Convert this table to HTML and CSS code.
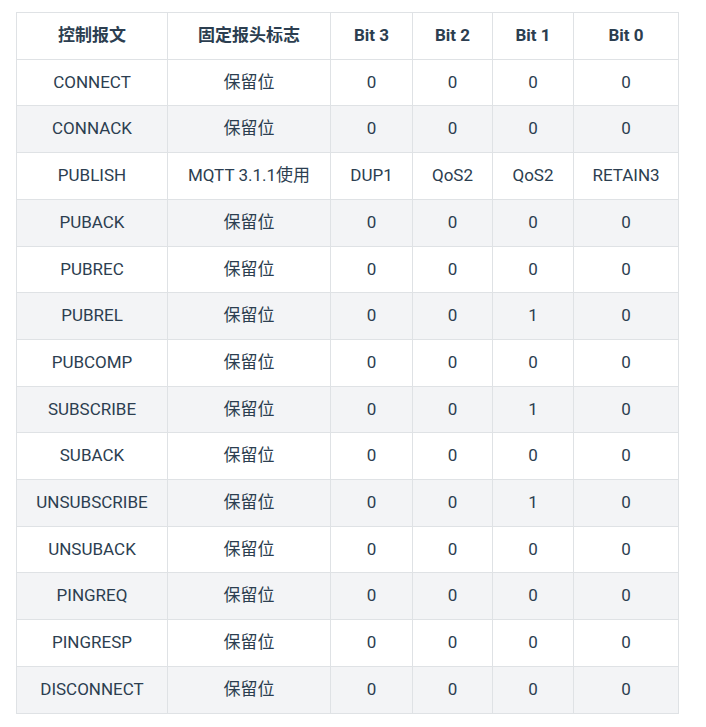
FILE: index.html
```html
<!DOCTYPE html>
<html lang="zh">
<head>
<meta charset="utf-8">
<link rel="stylesheet" href="styles.css">
</head>
<body>
<table class="tbl">
  <colgroup>
    <col class="c1"><col class="c2"><col class="c3"><col class="c4"><col class="c5"><col class="c6">
  </colgroup>
  <thead>
    <tr><th>控制报文</th><th>固定报头标志</th><th>Bit 3</th><th>Bit 2</th><th>Bit 1</th><th>Bit 0</th></tr>
  </thead>
  <tbody>
    <tr><td>CONNECT</td><td>保留位</td><td>0</td><td>0</td><td>0</td><td>0</td></tr>
    <tr><td>CONNACK</td><td>保留位</td><td>0</td><td>0</td><td>0</td><td>0</td></tr>
    <tr><td>PUBLISH</td><td>MQTT 3.1.1使用</td><td>DUP1</td><td>QoS2</td><td>QoS2</td><td>RETAIN3</td></tr>
    <tr><td>PUBACK</td><td>保留位</td><td>0</td><td>0</td><td>0</td><td>0</td></tr>
    <tr><td>PUBREC</td><td>保留位</td><td>0</td><td>0</td><td>0</td><td>0</td></tr>
    <tr><td>PUBREL</td><td>保留位</td><td>0</td><td>0</td><td>1</td><td>0</td></tr>
    <tr><td>PUBCOMP</td><td>保留位</td><td>0</td><td>0</td><td>0</td><td>0</td></tr>
    <tr><td>SUBSCRIBE</td><td>保留位</td><td>0</td><td>0</td><td>1</td><td>0</td></tr>
    <tr><td>SUBACK</td><td>保留位</td><td>0</td><td>0</td><td>0</td><td>0</td></tr>
    <tr><td>UNSUBSCRIBE</td><td>保留位</td><td>0</td><td>0</td><td>1</td><td>0</td></tr>
    <tr><td>UNSUBACK</td><td>保留位</td><td>0</td><td>0</td><td>0</td><td>0</td></tr>
    <tr><td>PINGREQ</td><td>保留位</td><td>0</td><td>0</td><td>0</td><td>0</td></tr>
    <tr><td>PINGRESP</td><td>保留位</td><td>0</td><td>0</td><td>0</td><td>0</td></tr>
    <tr><td>DISCONNECT</td><td>保留位</td><td>0</td><td>0</td><td>0</td><td>0</td></tr>
  </tbody>
</table>
</body>
</html>
```

FILE: styles.css
```css
html, body {
  margin: 0;
  padding: 0;
  background: #ffffff;
}
body {
  padding: 12px 0 0 16px;
  font-family: Roboto, "Noto Sans CJK SC", sans-serif;
  font-size: 17px;
  color: #2c3e50;
}
.tbl {
  border-collapse: collapse;
  table-layout: fixed;
  width: 662px;
}
.c1 { width: 151px; }
.c2 { width: 163px; }
.c3 { width: 82px; }
.c4 { width: 80px; }
.c5 { width: 81px; }
.c6 { width: 105px; }
.tbl th,
.tbl td {
  border: 1px solid #dfe2e5;
  padding: 10px 0;
  line-height: 25.7px;
  text-align: center;
  white-space: nowrap;
}
.tbl th {
  font-weight: 700;
}
.tbl tbody tr:nth-child(2n) {
  background: #f3f4f6;
}
```
